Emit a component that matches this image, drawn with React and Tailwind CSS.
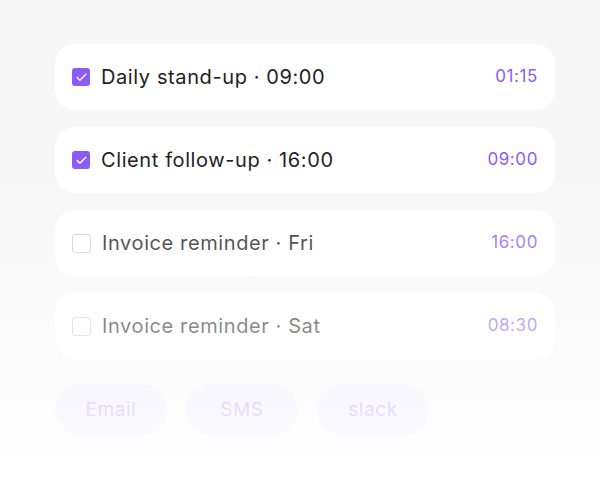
import { Check } from 'lucide-react';

const reminders = [
  { title: 'Daily stand-up · 09:00', time: '01:15', done: true },
  { title: 'Client follow-up · 16:00', time: '09:00', done: true },
  { title: 'Invoice reminder · Fri', time: '16:00', done: false },
  { title: 'Invoice reminder · Sat', time: '08:30', done: false },
];

const channels = ['Email', 'SMS', 'slack'];

function Box({ done }) {
  if (done) {
    return (
      <span className="flex h-[18px] w-[18px] shrink-0 items-center justify-center rounded-[3px] bg-[#8b5cf6]">
        <Check className="h-[13px] w-[13px] text-white" strokeWidth={2.5} />
      </span>
    );
  }
  return <span className="h-[19px] w-[19px] shrink-0 rounded-[3px] border border-[#cfcfcf] bg-white" />;
}

export default function App() {
  return (
    <div
      className="relative h-[480px] w-[600px] overflow-hidden bg-[#f7f7f7]"
      style={{ fontFamily: 'Inter, "Noto Sans", sans-serif' }}
    >
      <div className="flex w-[500px] flex-col gap-[17px] ml-[55px] pt-[44px]">
        {reminders.map((r) => (
          <div key={r.title} className="flex h-[66px] items-center rounded-[20px] bg-white pl-[17px] pr-[17px]">
            <Box done={r.done} />
            <span className="ml-[11px] text-[20px] tracking-[0.6px] text-[#222]">{r.title}</span>
            <span className="ml-auto text-[17px] tracking-[0.6px] text-[#8b5cf6]">{r.time}</span>
          </div>
        ))}
        <div className="mt-[8px] flex gap-[19px]">
          {channels.map((c) => (
            <div
              key={c}
              className="flex h-[52px] w-[112px] items-center justify-center rounded-full bg-[#ede9fe] text-[19px] tracking-[0.6px] text-[#a78bfa]"
            >
              {c}
            </div>
          ))}
        </div>
      </div>
      <div className="pointer-events-none absolute inset-x-0 bottom-0 top-[160px] bg-gradient-to-b from-white/0 to-white/[0.9]" />
    </div>
  );
}
